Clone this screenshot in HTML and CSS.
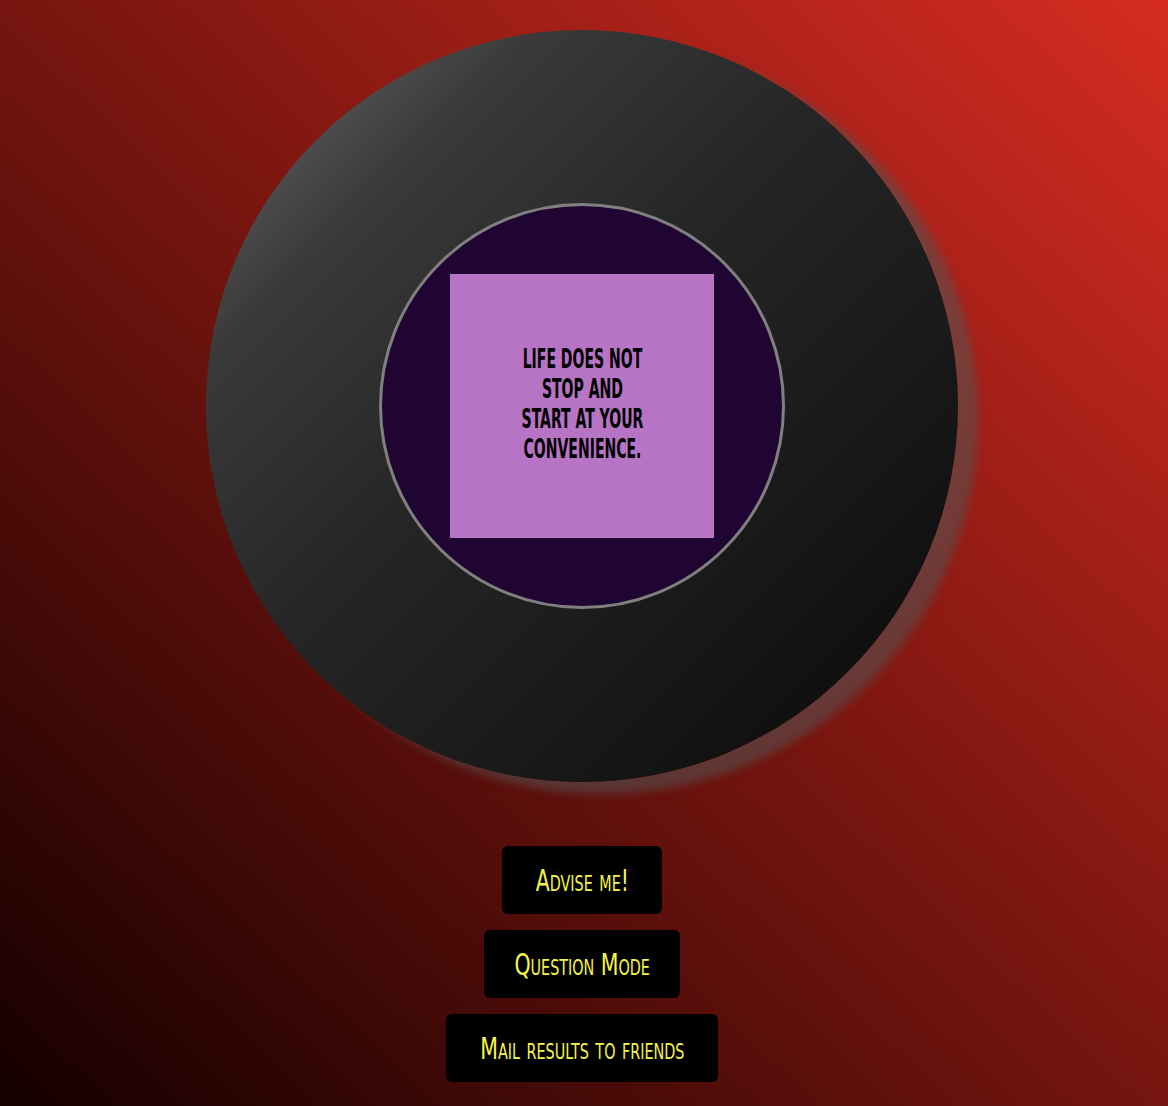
FILE: index.html
```html
<!DOCTYPE html>
<html>
<head>
<meta charset="utf-8">
<link rel="stylesheet" href="styles.css">
</head>
<body>
<main class="page">
  <div class="ball">
    <div class="window">
      <div class="answer">
        <p class="answer-text">Life does not<br>stop and<br>start at your<br>convenience.</p>
      </div>
    </div>
  </div>
  <div class="actions">
    <button class="btn btn-advise"><span class="btn-label">Advise me!</span></button>
    <button class="btn btn-question"><span class="btn-label">Question Mode</span></button>
    <button class="btn btn-mail"><span class="btn-label">Mail results to friends</span></button>
  </div>
</main>
</body>
</html>
```
FILE: styles.css
```css
html, body {
  margin: 0;
  padding: 0;
  height: 100%;
}
body {
  background: linear-gradient(to top right, #150000 0%, #76150f 50%, #d62c21 100%);
  font-family: "DejaVu Sans", sans-serif;
  overflow: hidden;
}
.page {
  display: flex;
  flex-direction: column;
  align-items: center;
  padding-top: 30px;
  padding-right: 4px;
}
.ball {
  width: 752px;
  height: 752px;
  border-radius: 50%;
  background: linear-gradient(to bottom right, #6e6e6e 0%, #3a3a3a 22%, #262626 45%, #191919 70%, #080808 100%);
  box-shadow: 20px 12px 9px rgba(84, 84, 84, 0.56);
  display: flex;
  align-items: center;
  justify-content: center;
}
.window {
  width: 400px;
  height: 400px;
  border: 3px solid #808080;
  border-radius: 50%;
  background: #200432;
  display: flex;
  align-items: center;
  justify-content: center;
}
.answer {
  width: 264px;
  height: 264px;
  background: #b874c4;
  display: flex;
  align-items: center;
  justify-content: center;
}
.answer-text {
  margin: 0 0 4px;
  font-family: "DejaVu Sans Condensed", sans-serif;
  font-weight: bold;
  text-transform: uppercase;
  text-align: center;
  font-size: 26px;
  line-height: 30px;
  color: #000;
  white-space: nowrap;
  transform: scaleX(0.6);
}
.actions {
  display: flex;
  flex-direction: column;
  align-items: center;
  gap: 16px;
  margin-top: 64px;
}
.btn {
  background: #000;
  color: #f7f64a;
  border: none;
  border-radius: 6px;
  height: 68px;
  padding: 0;
  display: flex;
  align-items: center;
  justify-content: center;
  font-family: "DejaVu Sans Condensed", sans-serif;
  font-variant: small-caps;
  font-size: 30px;
}
.btn-label {
  display: inline-block;
  white-space: nowrap;
  transform: scaleX(0.76);
}
.btn-advise { width: 160px; }
.btn-question { width: 196px; }
.btn-mail { width: 272px; }
```
